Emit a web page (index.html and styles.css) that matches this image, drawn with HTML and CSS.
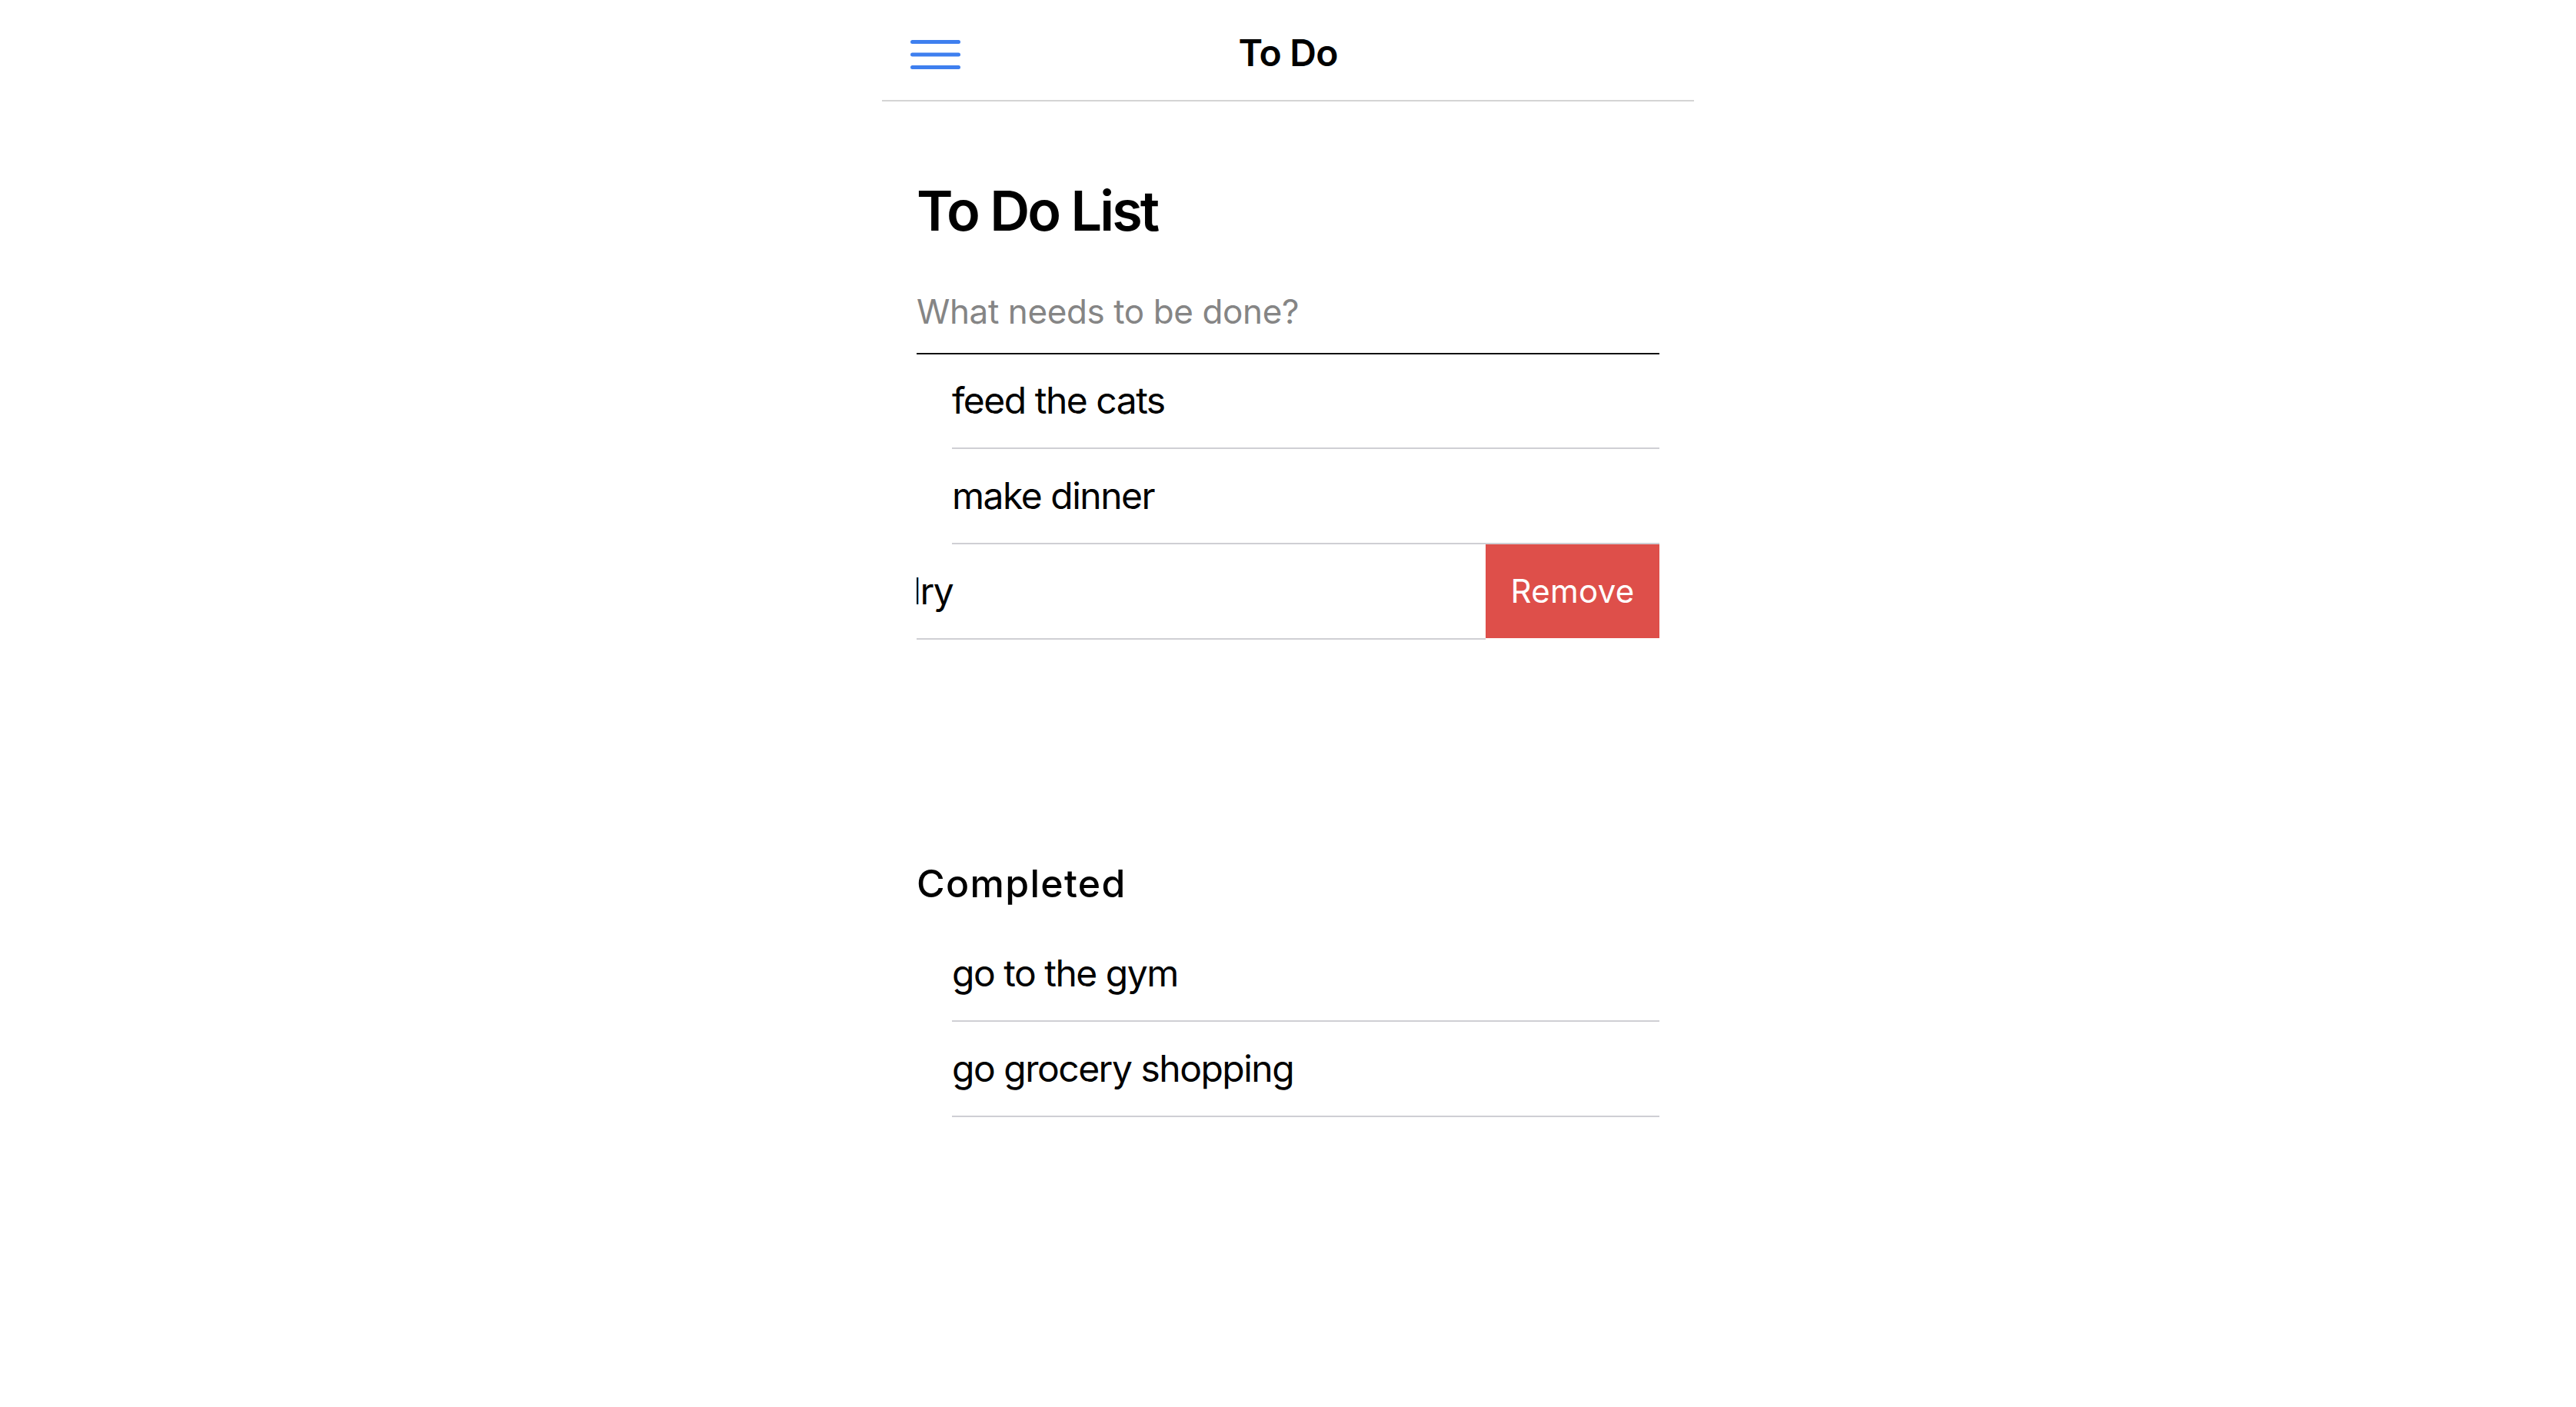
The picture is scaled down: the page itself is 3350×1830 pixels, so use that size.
FILE: index.html
```html
<!DOCTYPE html>
<html lang="en">
<head>
<meta charset="utf-8">
<title>To Do</title>
<link rel="stylesheet" href="styles.css">
</head>
<body>
<div class="phone">
  <header class="navbar">
    <div class="nav-left">
      <svg class="menu-icon" width="65" height="50" viewBox="0 0 65 50" aria-hidden="true">
        <line x1="2.5" y1="10.5" x2="62.5" y2="10.5"/>
        <line x1="2.5" y1="27" x2="62.5" y2="27"/>
        <line x1="2.5" y1="43.5" x2="62.5" y2="43.5"/>
      </svg>
    </div>
    <div class="nav-title">To Do</div>
    <div class="nav-right"></div>
  </header>

  <main class="content">
    <h1 class="page-title">To Do List</h1>
    <input class="new-todo" type="text" placeholder="What needs to be done?">

    <ul class="todo-list">
      <li class="row"><div class="row-inner">feed the cats</div></li>
      <li class="row"><div class="row-inner">make dinner</div></li>
      <li class="row swiped">
        <div class="row-inner">do laundry</div>
        <button class="remove-btn">Remove</button>
      </li>
    </ul>

    <h2 class="section-title">Completed</h2>
    <ul class="todo-list completed">
      <li class="row"><div class="row-inner">go to the gym</div></li>
      <li class="row"><div class="row-inner">go grocery shopping</div></li>
    </ul>
  </main>
</div>
</body>
</html>
```

FILE: styles.css
```css
* {
  box-sizing: border-box;
}

html, body {
  margin: 0;
  padding: 0;
  background: #ffffff;
}

body {
  font-family: "Inter", "Roboto", "Liberation Sans", sans-serif;
  color: #000;
}

.phone {
  width: 1056px;
  margin: 0 auto;
  min-height: 1830px;
  background: #fff;
}

/* Navigation bar */
.navbar {
  height: 132px;
  padding-top: 7px;
  border-bottom: 2px solid #d4d4d4;
  display: grid;
  grid-template-columns: 1fr auto 1fr;
  align-items: center;
}

.nav-left {
  display: flex;
  align-items: center;
  padding-left: 37px;
}

.menu-icon {
  display: block;
}

.menu-icon line {
  stroke: #3e7fef;
  stroke-width: 5;
  stroke-linecap: round;
}

.nav-title {
  font-size: 48px;
  line-height: 58px;
  font-weight: 600;
  letter-spacing: -0.8px;
}

/* Content */
.content {
  padding: 0 45px;
}

.page-title {
  margin: 98px 0 0;
  font-size: 72px;
  line-height: 88px;
  font-weight: 600;
  letter-spacing: -2.9px;
}

.new-todo {
  display: block;
  width: 100%;
  margin: 56px 0 0;
  padding: 0 0 24px;
  height: 87px;
  border: 0;
  border-bottom: 2px solid #111;
  border-radius: 0;
  outline: none;
  font-family: inherit;
  font-size: 44px;
  line-height: 54px;
  letter-spacing: -0.4px;
  color: #000;
  background: transparent;
}

.new-todo::placeholder {
  color: #858585;
}

.todo-list {
  list-style: none;
  margin: -1px 0 0;
  padding: 0;
}

.row {
  position: relative;
  height: 124px;
  overflow: hidden;
}

.row-inner {
  height: 124px;
  margin-left: 46px;
  border-bottom: 2px solid #cfcfd4;
  display: flex;
  align-items: center;
  font-size: 48px;
  line-height: 58px;
  letter-spacing: -1.5px;
  white-space: nowrap;
}

.row.swiped .row-inner {
  transform: translateX(-226px);
}

.remove-btn {
  position: absolute;
  top: 0;
  right: 0;
  bottom: 2px;
  width: 226px;
  border: 0;
  padding: 0;
  margin: 0;
  background: #de4f4a;
  color: #fff;
  font-family: inherit;
  font-size: 42px;
  line-height: 50px;
  letter-spacing: 0.3px;
}

.section-title {
  margin: 288px 0 0;
  font-size: 50px;
  line-height: 58px;
  font-weight: 500;
  letter-spacing: 1.3px;
}

.todo-list.completed {
  margin-top: 27px;
}
```
